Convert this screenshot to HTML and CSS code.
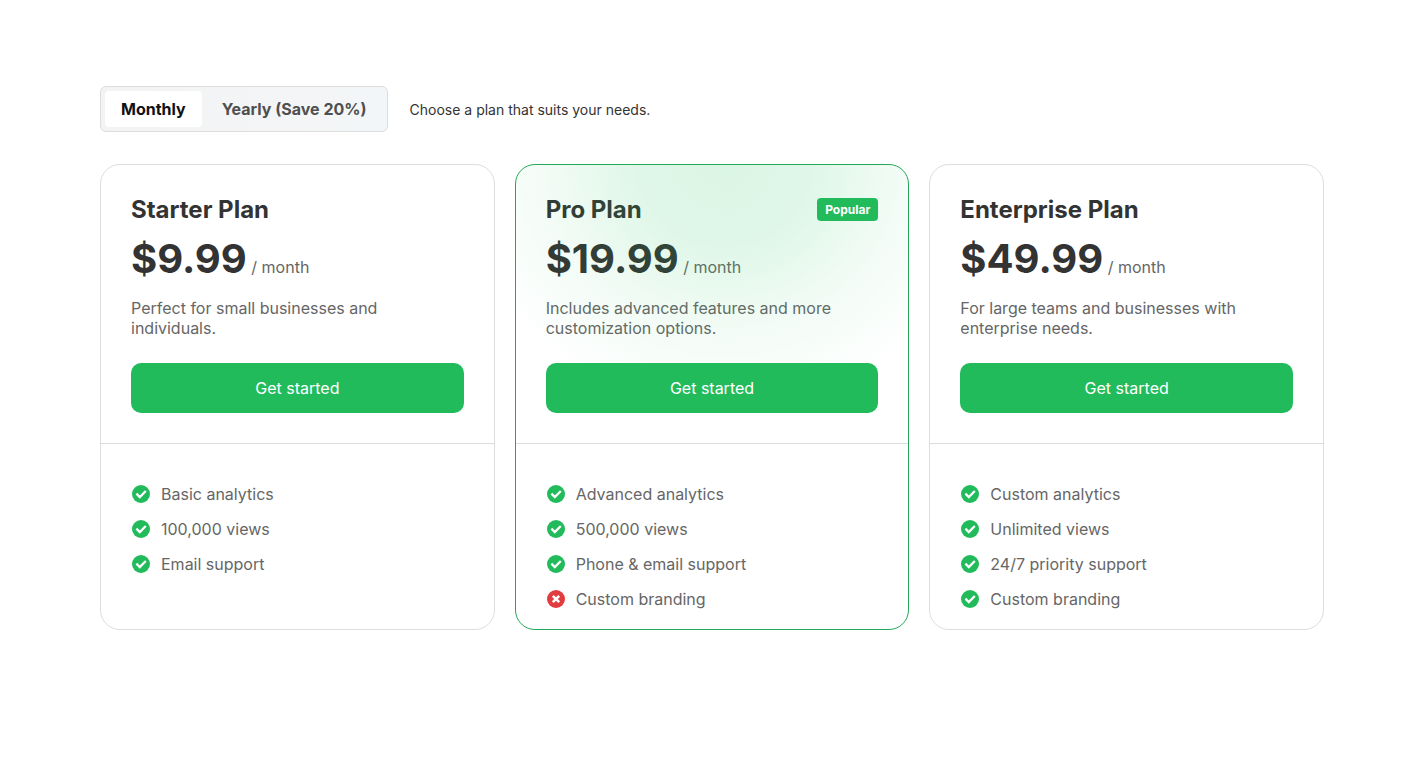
FILE: index.html
```html
<!DOCTYPE html>
<html lang="en">
<head>
    <meta charset="UTF-8">
    <meta name="viewport" content="width=device-width, initial-scale=1.0">
    <title>Pricing</title>
    <link rel="stylesheet" href="styles.css">
</head>
<body>
<svg class="sprite" aria-hidden="true">
    <symbol id="check" viewBox="0 0 20 20">
        <circle cx="10" cy="10" r="9" fill="#22bb5b"/>
        <path d="M5.4 9.6l3.4 3.4 6-6" fill="none" stroke="#fff" stroke-width="2.3"/>
    </symbol>
    <symbol id="cross" viewBox="0 0 20 20">
        <circle cx="10" cy="10" r="9" fill="#e23c3f"/>
        <path d="M6.8 6.8l6.4 6.4M13.2 6.8l-6.4 6.4" fill="none" stroke="#fff" stroke-width="2.6"/>
    </symbol>
</svg>
<main class="pricing">
    <div class="toolbar">
        <div class="toggle">
            <button type="button" class="toggle-btn active">Monthly</button>
            <button type="button" class="toggle-btn">Yearly (Save 20%)</button>
        </div>
        <p class="hint">Choose a plan that suits your needs.</p>
    </div>

    <div class="plans">
        <section class="plan">
            <div class="plan-head">
                <div class="plan-title">
                    <h2>Starter Plan</h2>
                </div>
                <p class="price"><strong>$9.99</strong> / month</p>
                <p class="desc">Perfect for small businesses and individuals.</p>
                <button type="button" class="start">Get started</button>
            </div>
            <ul class="features">
                <li><svg class="icon"><use href="#check"/></svg>Basic analytics</li>
                <li><svg class="icon"><use href="#check"/></svg>100,000 views</li>
                <li><svg class="icon"><use href="#check"/></svg>Email support</li>
            </ul>
        </section>

        <section class="plan popular">
            <div class="plan-head">
                <div class="plan-title">
                    <h2>Pro Plan</h2>
                    <span class="badge">Popular</span>
                </div>
                <p class="price"><strong>$19.99</strong> / month</p>
                <p class="desc">Includes advanced features and more customization options.</p>
                <button type="button" class="start">Get started</button>
            </div>
            <ul class="features">
                <li><svg class="icon"><use href="#check"/></svg>Advanced analytics</li>
                <li><svg class="icon"><use href="#check"/></svg>500,000 views</li>
                <li><svg class="icon"><use href="#check"/></svg>Phone &amp; email support</li>
                <li><svg class="icon"><use href="#cross"/></svg>Custom branding</li>
            </ul>
        </section>

        <section class="plan">
            <div class="plan-head">
                <div class="plan-title">
                    <h2>Enterprise Plan</h2>
                </div>
                <p class="price"><strong>$49.99</strong> / month</p>
                <p class="desc">For large teams and businesses with enterprise needs.</p>
                <button type="button" class="start">Get started</button>
            </div>
            <ul class="features">
                <li><svg class="icon"><use href="#check"/></svg>Custom analytics</li>
                <li><svg class="icon"><use href="#check"/></svg>Unlimited views</li>
                <li><svg class="icon"><use href="#check"/></svg>24/7 priority support</li>
                <li><svg class="icon"><use href="#check"/></svg>Custom branding</li>
            </ul>
        </section>
    </div>
</main>

<script>
    // switch the active billing period
    const buttons = document.querySelectorAll('.toggle-btn');
    buttons.forEach(btn => {
        btn.addEventListener('click', () => {
            buttons.forEach(b => b.classList.remove('active'));
            btn.classList.add('active');
        });
    });
</script>
</body>
</html>
```
FILE: styles.css
```css
* {
    margin: 0;
    padding: 0;
    box-sizing: border-box;
}
body {
    font-family: Inter, "Liberation Sans", sans-serif;
    font-size: 16px;
    line-height: 20px;
    color: #666;
    background: #fff;
}
button {
    font: inherit;
    border: none;
    cursor: pointer;
}
.sprite {
    display: none;
}
.pricing {
    padding: 86px 100px;
}

/* billing toggle */
.toolbar {
    display: flex;
    flex-wrap: wrap;
    align-items: center;
    gap: 22px;
    margin-bottom: 32px;
}
.toggle {
    display: flex;
    gap: 4px;
    padding: 4px;
    background: linear-gradient(90deg, #f3f3f3, #f3f6f8);
    border: 1px solid #ddd;
    border-radius: 6px;
}
.toggle-btn {
    padding: 8px 16px;
    font-weight: 700;
    color: #4f4f4f;
    background: transparent;
    border-radius: 4px;
}
.toggle-btn.active {
    color: #111;
    background: #fff;
}
.hint {
    padding-top: 2px;
    font-size: 14px;
    color: #333;
}

/* plans */
.plans {
    display: grid;
    grid-template-columns: repeat(3, 1fr);
    gap: 20px;
}
.plan {
    position: relative;
    border: 1px solid #ddd;
    border-radius: 20px;
    overflow: hidden;
}
.plan.popular {
    border-color: #22a858;
}
/* green glow over the head of the popular plan */
.popular::before {
    content: '';
    position: absolute;
    inset: 0 0 auto;
    height: 278px;
    background: radial-gradient(ellipse 270px 250px at 53% 0, rgba(34, 197, 94, .16), rgba(34, 197, 94, .15) 30%, rgba(34, 197, 94, .06) 65%, rgba(34, 197, 94, 0));
    pointer-events: none;
}
.plan-head {
    padding: 30px;
    border-bottom: 1px solid #ddd;
}
.plan-title {
    display: flex;
    justify-content: space-between;
    align-items: center;
    margin-bottom: 10px;
}
.plan-title h2 {
    font-size: 24px;
    line-height: 29px;
    font-weight: 700;
    color: #333;
}
/* badge and button stay above the glow */
.badge,
.start {
    position: relative;
    color: #fff;
    background: #22bb5b;
}
.badge {
    padding: 4px 8px;
    font-size: 12px;
    line-height: 15px;
    font-weight: 700;
    border-radius: 4px;
}
.price {
    margin-bottom: 15px;
}
.price strong {
    font-size: 40px;
    line-height: 49px;
    font-weight: 700;
    color: #333;
}
.desc {
    margin-bottom: 25px;
}
.start {
    width: 100%;
    height: 50px;
    border-radius: 10px;
}
.start:hover {
    background: #1da850;
}
.features {
    display: grid;
    gap: 15px;
    padding: 40px 30px 20px;
    list-style: none;
}
.features li {
    display: flex;
    align-items: center;
    gap: 10px;
}
.icon {
    flex: none;
    width: 20px;
    height: 20px;
}

@media (max-width: 900px) {
    .pricing {
        padding: 40px 20px;
    }
    .plans {
        grid-template-columns: 1fr;
    }
}
```
